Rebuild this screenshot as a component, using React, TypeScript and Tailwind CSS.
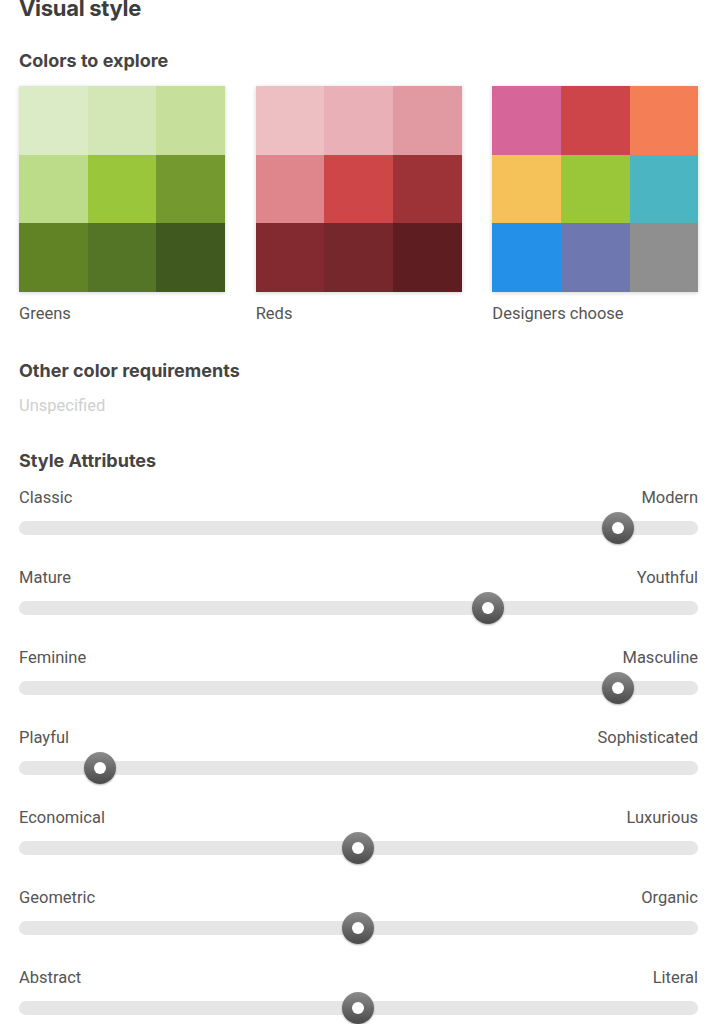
import React from "react";

const palettes = [
  {
    name: "Greens",
    colors: ["#dbebc5", "#d3e6b6", "#c6e09c", "#bcdc8a", "#99c63a", "#74992f", "#618225", "#557526", "#40591e"],
  },
  {
    name: "Reds",
    colors: ["#edbfc3", "#e9b1b7", "#e29aa2", "#de868b", "#cf4649", "#9d3336", "#822a2f", "#75272b", "#5d1d21"],
  },
  {
    name: "Designers choose",
    colors: ["#d66699", "#cd4548", "#f47e56", "#f5c25a", "#9ac63a", "#4bb5c1", "#2590e8", "#6e77b0", "#8f8f8f"],
  },
];

const sliders = [
  { left: "Classic", right: "Modern", value: 599 },
  { left: "Mature", right: "Youthful", value: 469 },
  { left: "Feminine", right: "Masculine", value: 599 },
  { left: "Playful", right: "Sophisticated", value: 81 },
  { left: "Economical", right: "Luxurious", value: 339 },
  { left: "Geometric", right: "Organic", value: 339 },
  { left: "Abstract", right: "Literal", value: 339 },
];

export default function App() {
  return (
    <div className="w-[715px] bg-white pl-[19px] pr-[17px] pb-10 overflow-hidden font-['Roboto',sans-serif]">
      <h1 className="text-[22px] font-bold tracking-[-0.3px] text-[#3d3d3d] leading-[28px] mt-[-6px] font-['Inter',sans-serif]">
        Visual style
      </h1>
      <h2 className="mt-[27px] text-[18px] font-bold text-[#444] leading-[24px] font-['Inter',sans-serif]">
        Colors to explore
      </h2>
      <div className="mt-[13px] grid grid-cols-3 gap-x-[31px]">
        {palettes.map((p) => (
          <div key={p.name}>
            <div className="grid grid-cols-3 w-[206px] h-[206px] shadow-[0_1px_4px_rgba(0,0,0,0.18)]">
              {p.colors.map((c, i) => (
                <div key={i} style={{ backgroundColor: c }} />
              ))}
            </div>
            <div className="mt-[12px] text-[16.5px] text-[#555] leading-[20px]">{p.name}</div>
          </div>
        ))}
      </div>
      <h2 className="mt-[35px] text-[18px] font-bold text-[#444] leading-[24px] font-['Inter',sans-serif]">
        Other color requirements
      </h2>
      <div className="mt-[13px] text-[16.5px] text-[#cfcfcf] leading-[20px]">Unspecified</div>
      <h2 className="mt-[33px] text-[18px] font-bold text-[#444] leading-[24px] font-['Inter',sans-serif]">
        Style Attributes
      </h2>
      <div className="mt-[15px] flex flex-col gap-[33px]">
        {sliders.map((s) => (
          <div key={s.left}>
            <div className="flex justify-between text-[16.5px] text-[#555] leading-[20px]">
              <span>{s.left}</span>
              <span>{s.right}</span>
            </div>
            <div className="relative mt-[13px] h-[14px] rounded-full bg-[#e6e6e6]">
              <div
                className="absolute top-1/2 w-[32px] h-[32px] -translate-x-1/2 -translate-y-1/2 rounded-full bg-gradient-to-b from-[#8c8c8c] to-[#4a4a4a] shadow-[0_1px_2px_rgba(0,0,0,0.3)] flex items-center justify-center"
                style={{ left: `${s.value}px` }}
              >
                <div className="w-[12px] h-[12px] rounded-full bg-white" />
              </div>
            </div>
          </div>
        ))}
      </div>
    </div>
  );
}
